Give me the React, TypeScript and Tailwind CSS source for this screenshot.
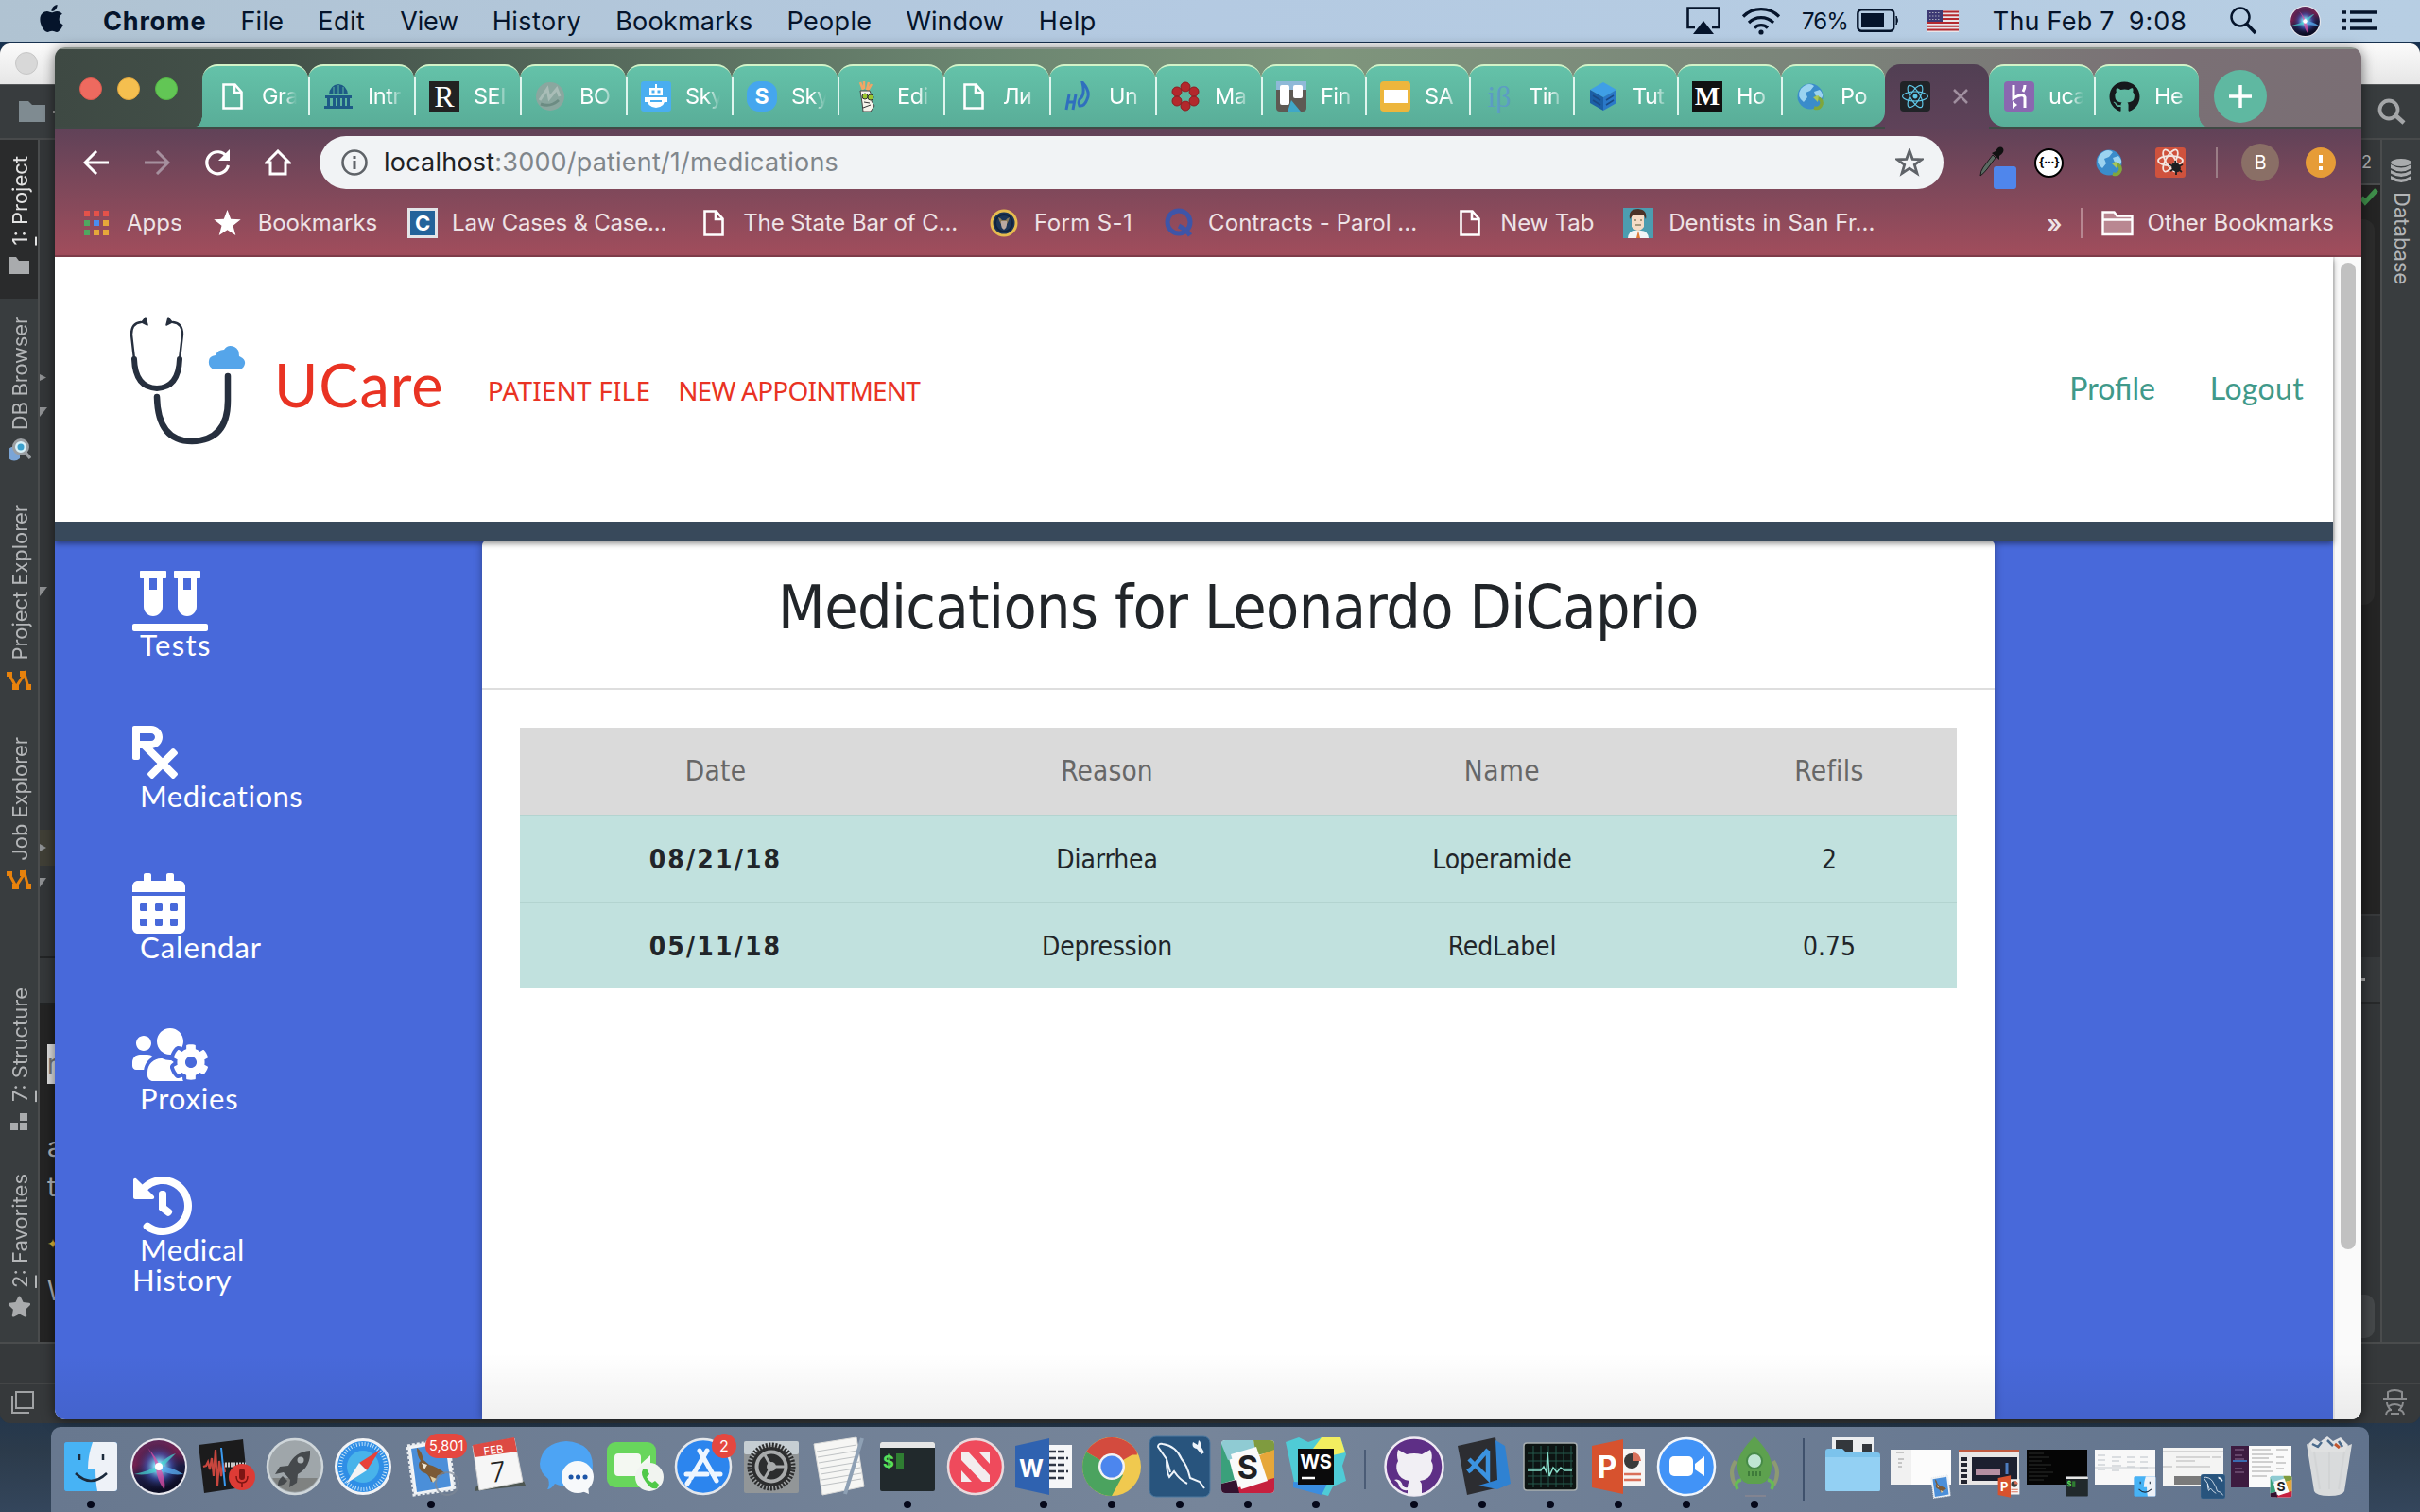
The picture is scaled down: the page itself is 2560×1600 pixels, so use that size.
import React, { useLayoutEffect, useRef, useState } from "react";
import { FaApple, FaCalendarAlt, FaGithub, FaGithubAlt, FaHistory, FaPrescription, FaReact, FaStar, FaUsersCog, FaVials } from "react-icons/fa";

/* Text run whose letter spacing is computed so that it fills exactly `w` pixels. */
function T({ w, className = "", children }: { w: number; className?: string; children: string }) {
  const ref = useRef<HTMLSpanElement>(null);
  const [spacing, setSpacing] = useState(0);
  useLayoutEffect(() => {
    const el = ref.current;
    if (el) setSpacing((w - el.offsetWidth) / children.length);
  }, [w, children]);
  return (
    <span ref={ref} className={"inline-block shrink-0 whitespace-pre " + className} style={{ letterSpacing: spacing }}>
      {children}
    </span>
  );
}

/* ---------- menu bar ---------- */

function MenuBar() {
  return (
    <header className="relative flex h-[44px] items-center bg-linear-to-r from-[#b0c3d2] via-[#b4cae2] to-[#b7cee3] font-[Inter,sans-serif] text-[27px] leading-[45px] font-normal text-[#05142b]">
      <FaApple className="-mt-[5px] ml-[40px] h-[33px] w-[29px]" />
      <T w={109} className="ml-[40px] font-bold">Chrome</T>
      <T w={46} className="ml-[36px]">File</T>
      <T w={50} className="ml-[36px]">Edit</T>
      <T w={62} className="ml-[37px]">View</T>
      <T w={94} className="ml-[36px]">History</T>
      <T w={145} className="ml-[36px]">Bookmarks</T>
      <T w={90} className="ml-[36px]">People</T>
      <T w={103} className="ml-[36px]">Window</T>
      <T w={61} className="ml-[37px]">Help</T>
      <div className="ml-auto flex items-center">
        <svg className="h-[30px] w-[36px]" viewBox="0 0 36 30">
          <path d="M9 22H1.5V1.5h33V22H27" fill="none" stroke="currentColor" strokeWidth="2.6" />
          <path d="M18 15l11 14H7z" fill="currentColor" />
        </svg>
        <svg className="ml-[22px] h-[30px] w-[42px]" viewBox="0 0 42 30" fill="none" stroke="currentColor" strokeWidth="3.2">
          <path d="M2 10.500a27 27 0 0 1 38 0M8 17a18.500 18.500 0 0 1 26 0M14 22.500a10 10 0 0 1 14 0" />
          <circle cx="21" cy="27" r="2.600" fill="currentColor" stroke="none" />
        </svg>
        <T w={49} className="ml-[22px] text-[24px]">76%</T>
        <svg className="ml-[9px] h-[26px] w-[46px]" viewBox="0 0 46 26">
          <rect x="1.300" y="1.300" width="38" height="22.400" rx="4" fill="none" stroke="currentColor" strokeWidth="2.400" />
          <rect x="5" y="5" width="24" height="15" fill="currentColor" />
          <path d="M42 8q3 4.500 0 9z" fill="currentColor" stroke="currentColor" />
        </svg>
        <svg className="ml-[29px] h-[23px] w-[33px]" viewBox="0 0 33 23">
          <rect width="33" height="23" fill="#e9e6ea" />
          <path d="M0 1.500h33M0 5.300h33M0 9.100h33M0 12.900h33M0 16.700h33M0 20.500h33" stroke="#b5292f" strokeWidth="2" />
          <rect width="16" height="12" fill="#3d3a74" />
          <path d="M2 2.500h12M2 6h12M2 9.500h12" stroke="#aab" strokeWidth="1" strokeDasharray="1.500 1.500" />
        </svg>
        <T w={129} className="ml-[36px]">Thu Feb 7</T>
        <T w={62} className="ml-[15px]">9:08</T>
        <svg className="ml-[44px] h-[30px] w-[30px]" viewBox="0 0 30 30" fill="none" stroke="currentColor" strokeWidth="2.500">
          <circle cx="12" cy="11" r="9.500" />
          <path d="M18.500 18L28 28" strokeWidth="3.500" />
        </svg>
        <SiriIcon className="ml-[34px] h-[33px] w-[33px]" />
        <svg className="mr-[45px] ml-[23px] h-[22px] w-[37px]" viewBox="0 0 37 22" stroke="currentColor" strokeWidth="3.600">
          <path d="M0 2h4M8 2h29M0 10.500h4M8 10.500h23M0 19h4M8 19h29" />
        </svg>
      </div>
    </header>
  );
}

function SiriIcon({ className }: { className?: string }) {
  return (
    <svg className={className} viewBox="0 0 60 60">
      <defs>
        <radialGradient id="siriGlow">
          <stop offset="0" stopColor="#ffffff" />
          <stop offset=".2" stopColor="#7fd6f0" />
          <stop offset=".55" stopColor="#3b4fa8" stopOpacity=".7" />
          <stop offset="1" stopColor="#171233" stopOpacity="0" />
        </radialGradient>
        <linearGradient id="siriBase" x1="0" y1="0" x2=".3" y2="1">
          <stop offset="0" stopColor="#54295a" />
          <stop offset=".45" stopColor="#73204f" />
          <stop offset=".7" stopColor="#1b1c42" />
          <stop offset="1" stopColor="#0c0d24" />
        </linearGradient>
      </defs>
      <circle cx="30" cy="30" r="30" fill="#e8e8ee" />
      <circle cx="30" cy="30" r="28" fill="url(#siriBase)" />
      <circle cx="30" cy="30" r="25" fill="url(#siriGlow)" />
      <path d="M4 38Q22 34 30 28 40 18 48 16 38 26 32 32 24 40 4 38z" fill="#45d6d0" opacity=".7" />
      <path d="M18 10Q28 20 31 30 38 44 36 55 28 44 27 32 26 20 18 10z" fill="#e04ea4" opacity=".75" />
      <path d="M30 29Q44 30 56 38 40 40 30 32z" fill="#56a8ea" opacity=".8" />
      <circle cx="30" cy="30" r="4" fill="#fff" />
    </svg>
  );
}

/* ---------- IDE window in the background ---------- */

function VLabel({ h, top, children }: { h: number; top: string; children: string }) {
  return (
    <div className={"-mr-[2px] rotate-180 text-[22px] leading-[40px] [writing-mode:vertical-rl] " + top}>
      <VFit h={h}>{children}</VFit>
    </div>
  );
}

function VFit({ h, children }: { h: number; children: string }) {
  const ref = useRef<HTMLSpanElement>(null);
  const [spacing, setSpacing] = useState(0);
  useLayoutEffect(() => {
    const el = ref.current;
    if (el) setSpacing((h - el.offsetHeight) / children.length);
  }, [h, children]);
  return (
    <span ref={ref} className="inline-block whitespace-pre" style={{ letterSpacing: spacing }}>
      {/^\d/.test(children) ? (
        <>
          <u className="decoration-2 underline-offset-4">{children[0]}</u>
          {children.slice(1)}
        </>
      ) : (
        children
      )}
    </span>
  );
}

function OrangeNodes({ className }: { className: string }) {
  return (
    <svg className={"h-[23px] w-[26px] shrink-0 " + className} viewBox="0 0 26 23" fill="none" stroke="#e8820c" strokeWidth="3">
      <path d="M3 5l7 13 9-14 4 15" />
      <path d="M0 2h6v5H0zM6 15h7v6H6zM14 1h7v6h-7zM20 15h6v6h-6z" fill="#e8820c" stroke="none" />
    </svg>
  );
}

function IdeWindow() {
  return (
    <section className="absolute inset-x-0 top-[46px] flex h-[1460px] flex-col overflow-hidden rounded-[11px] bg-[#36393b] font-[Inter,sans-serif] text-[#b4b6b8]">
      <div className="flex h-[43px] items-center bg-linear-to-b from-[#fbfbfb] to-[#e6e6e6] pl-[16px]">
        <div className="-mt-[1px] size-[24px] rounded-full border border-[#c6c6c6] bg-[#d8d8d8]" />
      </div>
      <div className="flex h-[59px] items-center border-t border-b-2 border-t-[#55585a] border-b-[#484a4b] bg-[#383c3e] pr-[15px] pl-[20px]">
        <svg className="h-[22px] w-[28px]" viewBox="0 0 28 22">
          <path d="M0 0h10l4 4h14v18H0z" fill="#7f8b91" />
        </svg>
        <div className="ml-[8px] h-[3px] w-[3px] bg-[#999]" />
        <svg className="ml-auto h-[28px] w-[30px]" viewBox="0 0 30 28" fill="none" stroke="#a4a6a8" strokeWidth="3.800">
          <circle cx="12" cy="12" r="9.500" />
          <path d="M19 18l9 8" strokeWidth="4.500" />
        </svg>
      </div>
      <div className="flex h-[1272px] justify-between">
        <div className="flex w-[58px]">
          <div className="flex w-[42px] shrink-0 flex-col items-center border-r-2 border-[#4a4c4d] bg-[#393d3f]">
            <div className="flex h-[168px] w-full flex-col items-center bg-[#2a2b2c] text-[#e3e3e3]">
              <VLabel h={95} top="mt-[17px]">1: Project</VLabel>
              <svg className="mt-[12px] h-[18px] w-[22px]" viewBox="0 0 22 18">
                <path d="M0 0h8l3 4h11v14H0z" fill="#a9abad" />
              </svg>
            </div>
            <VLabel h={120} top="mt-[19px]">DB Browser</VLabel>
            <svg className="mt-[8px] h-[25px] w-[25px] shrink-0" viewBox="0 0 25 25">
              <path d="M1 12q5-5 12 0v10q-6 5-12 0z" fill="#7ba5d6" />
              <circle cx="14" cy="10" r="7.500" fill="#d9f1f8" stroke="#9b9fa3" strokeWidth="3" />
              <circle cx="14" cy="10" r="3.500" fill="#3aa0cc" />
              <path d="M19 16l5 6" stroke="#9b9fa3" strokeWidth="3.500" />
            </svg>
            <VLabel h={165} top="mt-[46px]">Project Explorer</VLabel>
            <OrangeNodes className="mt-[10px]" />
            <VLabel h={131} top="mt-[48px]">Job Explorer</VLabel>
            <OrangeNodes className="mt-[10px]" />
            <VLabel h={121} top="mt-[102px]">7: Structure</VLabel>
            <svg className="mt-[11px] h-[18px] w-[18px] shrink-0" viewBox="0 0 18 18" fill="#a9abad">
              <path d="M10 0h8v8h-8zM0 10h8v8H0zM10 10h8v8h-8z" />
            </svg>
            <VLabel h={121} top="mt-[46px]">2: Favorites</VLabel>
            <FaStar className="mt-[7px] size-[25px] shrink-0 text-[#a9abad]" />
          </div>
          <div className="flex flex-1 flex-col bg-[#333638] text-[28px]">
            <div className="mt-[248px] h-[7px] w-[7px] bg-[#8e9092] [clip-path:polygon(0_0,100%_50%,0_100%)]" />
            <div className="mt-[28px] h-[10px] w-[8px] bg-[#8e9092] [clip-path:polygon(0_0,100%_0,0_100%)]" />
            <div className="mt-[180px] h-[10px] w-[8px] bg-[#8e9092] [clip-path:polygon(0_0,100%_0,0_100%)]" />
            <div className="mt-[247px] flex h-[38px] items-center bg-[#403f36]">
              <div className="h-[8px] w-[7px] bg-[#8e9092] [clip-path:polygon(0_0,100%_50%,0_100%)]" />
            </div>
            <div className="mt-[13px] h-[10px] w-[7px] bg-[#8e9092] [clip-path:polygon(0_0,100%_0,0_100%)]" />
            <div className="mt-[73px] h-[51px] border-y-2 border-[#232526] bg-[#35383a]" />
            <div className="flex flex-1 flex-col bg-[#242424] pl-[8px]">
              <div className="mt-[42px] h-[42px] bg-[#e2e2e2] leading-[42px] text-[#777]">r</div>
              <div className="mt-[46px] leading-[42px]">a</div>
              <div className="leading-[42px]">t</div>
              <div className="mt-[30px] h-[38px] text-[14px] leading-[18px] text-[#e0b83a]">✦</div>
              <div className="leading-[42px]">W</div>
            </div>
          </div>
        </div>
        <div className="flex w-[62px]">
          <div className="flex w-[20px] flex-col bg-[#242424]">
            <div className="h-[48px] border-b-2 border-[#4a4c4d] bg-[#35383a] text-[18px] leading-[48px]">2</div>
            <svg className="mt-[3px] h-[19px] w-[18px]" viewBox="0 0 18 19" fill="none" stroke="#3f8f4a" strokeWidth="5">
              <path d="M0 10l4 5L16 2" />
            </svg>
            <div className="mt-[14px] h-[408px] w-[14px] rounded-r-[12px] bg-[#2c2c2c]" />
            <div className="mt-[327px] h-[46px] border-t-2 border-[#37393b] bg-[#2d2f31]" />
            <div className="flex h-[49px] items-center border-b-2 border-[#27292a] bg-[#36393b]">
              <div className="h-[3px] w-[4px] bg-[#aaa]" />
            </div>
            <div className="flex-1 bg-[#333638] pt-[308px]">
              <div className="h-[46px] w-[14px] rounded-r-[10px] bg-[#45484a]" />
            </div>
          </div>
          <div className="flex flex-1 flex-col items-center border-l-2 border-[#4a4c4d] bg-[#393d3f] pt-[20px]">
            <svg className="h-[26px] w-[22px]" viewBox="0 0 22 26" fill="#a9abad">
              <ellipse cx="11" cy="4" rx="11" ry="4" />
              <path d="M0 6q11 7 22 0v4q-11 7-22 0zM0 12q11 7 22 0v3.500q-11 7-22 0zM0 18q11 7 22 0v3.500q-11 7-22 0z" />
            </svg>
            <div className="mt-[9px] -mr-[1px] text-[22px] leading-[36px] [writing-mode:vertical-rl]">
              <VFit h={98}>Database</VFit>
            </div>
          </div>
        </div>
      </div>
      <div className="h-[43px] border-t-2 border-[#4a4c4d] bg-[#36393b]" />
      <div className="flex flex-1 items-center justify-between border-t-2 border-[#444647] bg-[#36393b] pr-[14px] pb-[4px] pl-[12px]">
        <svg className="h-[24px] w-[24px]" viewBox="0 0 24 24" fill="none" stroke="#a0a2a4" strokeWidth="2">
          <path d="M5 1h18v17H5zM1 5v18h18" />
        </svg>
        <svg className="h-[28px] w-[25px]" viewBox="0 0 25 28" fill="none" stroke="#8b8d8f" strokeWidth="2">
          <path d="M5 9V3q7-4 15 0v6M0 10h25M4 14q0 4 4 8M21 14q0 4-4 8M6 18q6-4 13 0M3 27q1-5 6-5M22 27q-1-5-6-5M8 26h9" />
        </svg>
      </div>
    </section>
  );
}

/* ---------- favicons ---------- */

function DocIcon({ className = "h-[28px] w-[22px]" }: { className?: string }) {
  return (
    <svg className={className} viewBox="0 0 22 28" fill="none" stroke="#fff" strokeWidth="2.600">
      <path d="M1.500 1.500h12l7 8v17h-19z" />
      <path d="M13 2v8h7.500" />
    </svg>
  );
}

function Globe() {
  return (
    <svg className="size-[32px]" viewBox="0 0 32 32">
      <circle cx="15" cy="16" r="13.500" fill="#3a8ccb" />
      <path d="M5 8q8-8 14-3l-4 5-5 2 2 5-4 5Q0 16 5 8zM19 11l6-2q5 5 2 9l-6-2z" fill="#9bd3f0" />
      <path d="M20 17q8 1 7 7-2 6-8 4" fill="none" stroke="#7fa63c" strokeWidth="3.500" />
      <path d="M24 15l-6 2 5 5z" fill="#a8c65a" />
    </svg>
  );
}

const box = (cls: string, child: React.ReactNode) => <div className={"flex size-[32px] items-center justify-center " + cls}>{child}</div>;

const FAV: Record<string, React.ReactNode> = {
  doc: box("", <DocIcon />),
  dome: (
    <svg className="size-[32px]" viewBox="0 0 32 32" fill="#1d5a86">
      <path d="M6 14q1-10 10-11 9 1 10 11zM2 15h28v3H2zM4 18h3v8H4zM10 18h3v8h-3zM15 18h3v8h-3zM20 18h3v8h-3zM25 18h3v8h-3zM1 26h30v3H1z" />
      <path d="M16 4v10M11 6v8M21 6v8" stroke="#5cb59e" />
    </svg>
  ),
  r: box("bg-[#222] font-['Liberation_Serif',serif] text-[32px] text-white", "R"),
  grey: (
    <svg className="size-[32px]" viewBox="0 0 32 32">
      <circle cx="16" cy="16" r="15" fill="#8aa79f" />
      <path d="M5 20l8-12 2 10 8-10 3 8" fill="none" stroke="#a9bdb7" strokeWidth="3" />
      <path d="M6 24q10 4 19-4" fill="none" stroke="#6c8c83" strokeWidth="3" />
    </svg>
  ),
  robot: (
    <svg className="size-[32px]" viewBox="0 0 32 32">
      <rect width="32" height="32" rx="3" fill="#4aaef0" />
      <path d="M15 3h2v4h-2zM9 7h14v8H9zM6 17h20q0 10-10 11Q6 27 6 17zM4 17h3v5H4zM25 17h3v5h-3z" fill="#fff" />
      <path d="M11.500 9.500h3v3h-3zM17.500 9.500h3v3h-3zM10 20h12v2H10z" fill="#4aaef0" />
    </svg>
  ),
  skype: box("rounded-[13px] bg-[#45a6ee] font-[Inter,sans-serif] text-[23px] font-bold text-white", "S"),
  daddy: (
    <svg className="size-[32px]" viewBox="0 0 32 32">
      <path d="M8 1l3 8M12 0v8M17 1l-2 8M20 3l-4 7" stroke="#f0a565" strokeWidth="2.500" />
      <path d="M8 10h10l2 5v6l3 5-4 6h-8l-1-9z" fill="#f6f3ea" stroke="#444" />
      <circle cx="13" cy="16" r="3" fill="#9ac531" stroke="#333" />
      <circle cx="19" cy="17" r="3" fill="#9ac531" stroke="#333" />
      <path d="M12 22l6 1M11 28l8-3" stroke="#333" />
    </svg>
  ),
  hd: (
    <svg className="size-[32px]" viewBox="0 0 32 32" fill="none" stroke="#2f6fbe" strokeWidth="3">
      <path d="M5 14L2 30M12 14L9 30M4 22h7M19 1q9 10 5 18-3 8-8 7-2-5 1-8 5-4 2-17z" />
    </svg>
  ),
  flower: (
    <svg className="size-[32px]" viewBox="0 0 32 32">
      <g fill="#b3282c" stroke="#8d1c20">
        <circle cx="16" cy="6" r="5" />
        <circle cx="7" cy="11" r="5" />
        <circle cx="25" cy="11" r="5" />
        <circle cx="7" cy="21" r="5" />
        <circle cx="25" cy="21" r="5" />
        <circle cx="16" cy="26" r="5" />
      </g>
      <circle cx="16" cy="16" r="4.500" fill="#5cb59e" />
    </svg>
  ),
  trello: (
    <svg className="size-[32px]" viewBox="0 0 32 32">
      <rect width="32" height="32" rx="4" fill="#5e5953" />
      <path d="M0 0h32v9H0z" fill="#8fb9d8" />
      <path d="M12 32l4-12 10 12z" fill="#3fa7c8" />
      <rect x="4" y="4" width="10" height="21" rx="2" fill="#fff" />
      <rect x="18" y="4" width="10" height="14" rx="2" fill="#fff" />
    </svg>
  ),
  slides: box("rounded-[4px] bg-[#edb63c]", <div className="h-[14px] w-[25px] bg-white" />),
  ib: box("font-['Liberation_Serif',serif] text-[32px] text-[#5c9cc4]", "iβ"),
  cube: (
    <svg className="size-[32px]" viewBox="0 0 32 32">
      <path d="M16 1l14 8-14 8L2 9z" fill="#3f9fe6" />
      <path d="M2 9l14 8v14L2 23z" fill="#1c5fa6" />
      <path d="M30 9l-14 8v14l14-8z" fill="#2a78c8" />
      <path d="M5 15l8 5M5 20l8 5M19 20l8-5M19 25l8-5" stroke="#1a4a86" strokeWidth="1.500" />
    </svg>
  ),
  medium: box("bg-[#111] font-['Liberation_Serif',serif] text-[28px] font-bold text-white", "M"),
  globe: <Globe />,
  react: box("rounded-[4px] bg-[#202327]", <FaReact className="size-[28px] text-[#5fc6e6]" />),
  heroku: (
    <svg className="size-[32px]" viewBox="0 0 32 32">
      <rect width="32" height="32" rx="4" fill="#8a67b0" />
      <path d="M10 4v14q10-6 12-1v11M20 11q2-3 2-7" fill="none" stroke="#fff" strokeWidth="3" />
      <path d="M9 21l5 4-5 4z" fill="#fff" />
    </svg>
  ),
  github: <FaGithub className="size-[33px] text-[#16191c]" />,
};

const TABS: { icon: string; text: string; w: string }[] = [
  { icon: "doc", text: "Gra", w: "w-[112px]" },
  { icon: "dome", text: "Intr", w: "w-[112px]" },
  { icon: "r", text: "SEI", w: "w-[112px]" },
  { icon: "grey", text: "BO", w: "w-[112px]" },
  { icon: "robot", text: "Sky", w: "w-[112px]" },
  { icon: "skype", text: "Sky", w: "w-[112px]" },
  { icon: "daddy", text: "Edi", w: "w-[112px]" },
  { icon: "doc", text: "Ли", w: "w-[112px]" },
  { icon: "hd", text: "Un", w: "w-[112px]" },
  { icon: "flower", text: "Ma", w: "w-[112px]" },
  { icon: "trello", text: "Fin", w: "w-[110px]" },
  { icon: "slides", text: "SA", w: "w-[110px]" },
  { icon: "ib", text: "Tin", w: "w-[110px]" },
  { icon: "cube", text: "Tut", w: "w-[110px]" },
  { icon: "medium", text: "Ho", w: "w-[110px]" },
  { icon: "globe", text: "Po", w: "w-[110px]" },
];

function Tab({ icon, text, w, first, edge = "" }: { icon: string; text: string; w: string; first?: boolean; edge?: string }) {
  const wrap = edge ? "bg-[linear-gradient(to_top,#5d4159_16px,transparent_16px)]" : "";
  return (
    <div className={w + " shrink-0 " + wrap}>
      <div className={"flex h-full items-center rounded-t-[16px] border-t-2 border-[#d3f3c8] bg-linear-to-b from-[#64c2a9] to-[#59ad98] " + edge}>
        <div className={"h-[40px] w-[2px] " + (first ? "" : "bg-[#dff5ee]")} />
        <div className="ml-[14px] shrink-0">{FAV[icon]}</div>
        <div className="ml-[15px] w-[37px] overflow-hidden text-[23.5px] leading-[32px] tracking-[-0.5px] whitespace-nowrap text-white [mask-image:linear-gradient(to_right,black_60%,transparent)]">{text}</div>
      </div>
    </div>
  );
}

function TabStrip() {
  return (
    <div className="flex h-[86px] items-end border-t-2 border-b-2 border-t-[#8b938c] border-b-[#3f4a45] bg-[linear-gradient(90deg,#3e4943_0%,#44524a_10%,#6b8570_40%,#7e957c_55%,#7b857a_75%,#7a7075_92%,#7a6e74_100%)]">
      <div className="flex h-[80px] w-[149px] items-center gap-[16px] pl-[26px]">
        <div className="size-[24px] rounded-full border border-[#dc5a4f] bg-[#ee6a5f]" />
        <div className="size-[24px] rounded-full border border-[#dfa63f] bg-[#f5bf4f]" />
        <div className="size-[24px] rounded-full border border-[#55b646] bg-[#62c655]" />
      </div>
      <div className="h-[14px] w-[7px] bg-[radial-gradient(ellipse_at_top_left,transparent_0_68%,#59ad98_72%)]" />
      <div className="flex h-[66px]">
        {TABS.map((t, i) => (
          <Tab key={i} {...t} first={i === 0} edge={i === 15 ? "rounded-br-[16px]" : ""} />
        ))}
        <div className="flex h-[68px] w-[110px] items-center rounded-t-[16px] bg-linear-to-b from-[#513f53] to-[#5f4259] pl-[16px]">
          {FAV.react}
          <svg className="ml-[24px] size-[16px]" viewBox="0 0 16 16" stroke="#a08f9f" strokeWidth="2.500">
            <path d="M1 1l14 14M15 1L1 15" />
          </svg>
        </div>
        <Tab icon="heroku" text="uca" w="w-[111px]" first edge="rounded-bl-[16px]" />
        <Tab icon="github" text="He" w="w-[111px]" />
      </div>
      <div className="h-[14px] w-[8px] bg-[radial-gradient(ellipse_at_top_right,transparent_0_68%,#59ad98_72%)]" />
      <div className="mb-[4px] ml-[8px] flex size-[56px] items-center justify-center rounded-full bg-[#5fb8a1]">
        <svg className="size-[24px]" viewBox="0 0 24 24" stroke="#fff" strokeWidth="3.500">
          <path d="M12 0v24M0 12h24" />
        </svg>
      </div>
    </div>
  );
}

function Toolbar() {
  return (
    <div className="flex h-[72px] items-center text-[27px]">
      <svg className="ml-[30px] h-[26px] w-[28px]" viewBox="0 0 28 26" fill="none" stroke="#fff" strokeWidth="3">
        <path d="M14 1L2 13l12 12M2 13h25" />
      </svg>
      <svg className="ml-[36px] h-[26px] w-[28px]" viewBox="0 0 28 26" fill="none" stroke="#a6909e" strokeWidth="3">
        <path d="M14 1l12 12-12 12M26 13H1" />
      </svg>
      <svg className="ml-[36px] size-[28px]" viewBox="0 0 28 28" fill="none" stroke="#fff" strokeWidth="3.200">
        <path d="M24 8a11.500 11.500 0 1 0 1.500 9" />
        <path d="M27 0v12H15z" fill="#fff" stroke="none" />
      </svg>
      <svg className="ml-[36px] size-[28px]" viewBox="0 0 28 28" fill="none" stroke="#fff" strokeWidth="3">
        <path d="M2 14L14 2l12 12h-4v12H6V14z" />
      </svg>
      <div className="ml-[30px] flex h-[56px] w-[1718px] items-center rounded-full bg-[#f1f3f5] text-[#80868b]">
        <svg className="ml-[23px] size-[28px]" viewBox="0 0 28 28" fill="none" stroke="#5f6368" strokeWidth="2.600">
          <circle cx="14" cy="14" r="12.500" />
          <path d="M14 12v9M14 7v3" strokeWidth="3" />
        </svg>
        <T w={117} className="mt-[1px] ml-[17px] text-[#202124]">localhost</T>
        <T w={364} className="mt-[1px]">:3000/patient/1/medications</T>
        <svg className="mr-[21px] ml-auto size-[30px]" viewBox="0 0 30 30" fill="none" stroke="#5f6368" strokeWidth="2.800">
          <path d="M15 2.500l3.200 8.800 9.600.5-7.500 5.600 2.700 9-8-5.200-8 5.200 2.700-9-7.500-5.600 9.600-.5z" />
        </svg>
      </div>
      <svg className="ml-[37px] h-[56px] w-[42px] self-center" viewBox="0 0 42 56">
        <rect x="16" y="32" width="24" height="24" rx="3" fill="#4f86ec" />
        <path d="M2 42q0-5 3-9l10-13 3 3-9 12q-3 4-7 7z" fill="#5a6a62" stroke="#1a1a1a" />
        <path d="M14 18l4-2q4-7 8-3 2 4-4 8v4z" fill="#111" />
      </svg>
      <div className="ml-[17px] flex size-[31px] items-center justify-center rounded-full border-2 border-black bg-white text-[13px] font-bold tracking-tighter text-black">{"{···}"}</div>
      <div className="ml-[33px]">
        <Globe />
      </div>
      <div className="ml-[32px] flex size-[32px] items-center justify-center rounded-[3px] bg-[#cf523d]">
        <svg className="size-[30px]" viewBox="0 0 30 30" fill="none" stroke="#f3e5e0" strokeWidth="1.800">
          <ellipse cx="15" cy="13" rx="13" ry="5" />
          <ellipse cx="15" cy="13" rx="13" ry="5" transform="rotate(60 15 13)" />
          <ellipse cx="15" cy="13" rx="13" ry="5" transform="rotate(120 15 13)" />
          <ellipse cx="21" cy="20" rx="4.500" ry="5.500" fill="#1d1f22" stroke="none" transform="rotate(-35 21 20)" />
          <path d="M14 17l6 3M15 24l5-3M20 13l1 6M28 17l-6 3M27 25l-5-4M21 28v-6" stroke="#1d1f22" />
        </svg>
      </div>
      <div className="ml-[32px] h-[32px] w-[2px] bg-[#9b7d86]" />
      <div className="ml-[25px] flex size-[40px] items-center justify-center rounded-full bg-[#8a6f66] text-[20px] text-white">B</div>
      <div className="ml-[28px] flex size-[32px] flex-col items-center justify-center gap-[4px] rounded-full bg-[#e69c37]">
        <div className="h-[8px] w-[4px] bg-white" />
        <div className="size-[4px] bg-white" />
      </div>
    </div>
  );
}

const DOTS = ["bg-[#e4524a]", "bg-[#e4524a]", "bg-[#e4524a]", "bg-[#4fa860]", "bg-[#4b8df0]", "bg-[#e6a83a]", "bg-[#4fa860]", "bg-[#e6a83a]", "bg-[#e6a83a]"];

function Bookmarks() {
  return (
    <div className="flex h-[62px] items-center pb-[6px] text-[24px] text-[#eee3e6]">
      <div className="ml-[31px] grid grid-cols-3 gap-[4px]">
        {DOTS.map((c, i) => (
          <div key={i} className={"size-[6px] " + c} />
        ))}
      </div>
      <T w={59} className="ml-[19px]">Apps</T>
      <svg className="ml-[33px] h-[28px] w-[29px]" viewBox="0 0 29 28" fill="#fff">
        <path d="M14.500 0l3.700 9.800 10.500.5-8.200 6.500 2.800 10.200-8.800-5.800L5.700 27l2.800-10.200L.3 10.300l10.500-.5z" />
      </svg>
      <T w={126} className="ml-[18px]">Bookmarks</T>
      <div className="ml-[32px] flex size-[32px] items-center justify-center border-[3px] border-[#e3e5e8] bg-[#23639a] text-[22px] font-bold text-white">C</div>
      <T w={227} className="ml-[15px]">Law Cases &amp; Case...</T>
      <div className="ml-[39px]">
        <DocIcon />
      </div>
      <T w={227} className="ml-[20px]">The State Bar of C...</T>
      <svg className="ml-[34px] size-[30px]" viewBox="0 0 30 30">
        <circle cx="15" cy="15" r="13" fill="#1c3556" stroke="#e6bb4f" strokeWidth="3" />
        <circle cx="15" cy="15" r="9" fill="none" stroke="#11233c" strokeWidth="2" />
        <path d="M9 9q2 7 4 8h4q2-1 4-8-3 1-4 3h-4q-1-2-4-3z" fill="#8a7a5a" />
        <path d="M12 13h6v4q0 3-3 5-3-2-3-5z" fill="#b9a9a0" />
      </svg>
      <T w={104} className="ml-[17px]">Form S-1</T>
      <svg className="ml-[33px] size-[32px]" viewBox="0 0 32 32" fill="none" stroke="#3e55a8" strokeWidth="5">
        <circle cx="16" cy="15" r="12" />
        <path d="M16 19q8 4 12 10" />
      </svg>
      <T w={221} className="ml-[15px]">Contracts - Parol ...</T>
      <div className="ml-[45px]">
        <DocIcon />
      </div>
      <T w={99} className="ml-[21px]">New Tab</T>
      <svg className="ml-[31px] size-[32px]" viewBox="0 0 32 32">
        <rect width="32" height="32" fill="#4c9db0" />
        <path d="M5 32q1-8 7-8h7q7 0 8 8z" fill="#f2f4f6" />
        <path d="M9 8h13v12q-6 8-13 0z" fill="#f5dcc6" />
        <path d="M7 12Q5 1 16 1q10 1 8 11l-2-4H10z" fill="#4a3328" />
        <path d="M16 24l2 8h-4z" fill="#e07b39" />
        <path d="M12 13h2M18 13h2M13 18h6" stroke="#553" />
      </svg>
      <T w={218} className="ml-[16px]">Dentists in San Fr...</T>
      <div className="ml-auto text-[26px] font-semibold">»</div>
      <div className="ml-[20px] h-[32px] w-[2px] bg-[#b78791]" />
      <svg className="ml-[20px] h-[27px] w-[34px]" viewBox="0 0 34 27" fill="#b98791" stroke="#fff" strokeWidth="2.400">
        <path d="M1.500 1.500h12l3 4h16v19.500h-31z" />
        <path d="M2 9.500h30" />
      </svg>
      <T w={198} className="mr-[29px] ml-[14px]">Other Bookmarks</T>
    </div>
  );
}

/* ---------- the UCare page ---------- */

const NAV = [
  { icon: <FaVials className="h-[64px] w-[80px]" />, text: [["Tests", 76]] },
  { icon: <FaPrescription className="h-[64px] w-[48px]" />, text: [["Medications", 173]] },
  { icon: <FaCalendarAlt className="h-[64px] w-[56px]" />, text: [["Calendar", 129]] },
  { icon: <FaUsersCog className="h-[64px] w-[80px]" />, text: [["Proxies", 105]] },
  { icon: <FaHistory className="h-[64px] w-[64px]" />, text: [["Medical", 111], ["History", 105]] },
] as { icon: React.ReactNode; text: [string, number][] }[];

const HEAD: [string, number][] = [["Date", 64], ["Reason", 98], ["Name", 80], ["Refils", 73]];
const ROWS: [string, number][][] = [
  [["08/21/18", 141], ["Diarrhea", 107], ["Loperamide", 147], ["2", 16]],
  [["05/11/18", 141], ["Depression", 138], ["RedLabel", 115], ["0.75", 56]],
];

function Page() {
  return (
    <div className="flex min-h-0 flex-1 bg-white font-['Noto_Sans',sans-serif]">
      <div className="flex w-[2410px] shrink-0 flex-col">
        <div className="relative z-10 flex h-[300px] shrink-0 border-b-[20px] border-[#38495b] bg-white shadow-[0_3px_6px_rgba(0,0,0,0.45)]">
          <svg className="mt-[62px] ml-[78px] h-[140px] w-[126px] shrink-0" viewBox="0 0 126 140" fill="none" stroke="#262f3e" strokeLinecap="round">
            <path d="M13 7Q3 8 3 20L6 46M47 7Q57 8 57 20L54 46" strokeWidth="2.400" />
            <path d="M18 2l2 8-6-3zM42 2l-2 8 6-3z" strokeWidth="1.500" strokeLinejoin="round" fill="#262f3e" />
            <path d="M6 46Q7 76 30 77 53 76 54 46" strokeWidth="6" />
            <path d="M30 86Q31 133 67 133 105 132 105 90V64" strokeWidth="6.500" />
            <path d="M91 57Q84 55 85 48 85 43 92 42 94 36 101 36 105 30 112 33 117 35 117 43 124 46 123 51 122 56 117 57z" fill="#55a5ea" stroke="none" />
          </svg>
          <T w={180} className="mt-[95px] ml-[28px] font-[Lato,sans-serif] text-[63px] leading-[80px] text-[#e93323]">UCare</T>
          <T w={173} className="mt-[121px] ml-[46px] text-[28px] leading-[40px] text-[#e93323]">PATIENT FILE</T>
          <T w={256} className="mt-[121px] ml-[29px] text-[28px] leading-[40px] text-[#e93323]">NEW APPOINTMENT</T>
          <T w={90} className="mt-[119px] ml-auto font-[Lato,sans-serif] text-[32px] leading-[40px] text-[#40998a]">Profile</T>
          <T w={99} className="mt-[119px] mr-[31px] ml-[58px] font-[Lato,sans-serif] text-[32px] leading-[40px] text-[#40998a]">Logout</T>
        </div>
        <div className="flex flex-1 bg-[#4869da]">
          <nav className="flex w-[452px] shrink-0 flex-col pt-[32px] pl-[82px] font-[Lato,sans-serif] text-[31px] leading-[32px] text-white">
            {NAV.map((n, i) => (
              <div key={i} className="flex h-[160px] flex-col items-start">
                <div className="mb-[-2px]">{n.icon}</div>
                {n.text.map(([t, w], j) => (
                  <T key={t} w={w} className={j === 0 ? "ml-[8px]" : ""}>{t}</T>
                ))}
              </div>
            ))}
          </nav>
          <main className="w-[1600px] rounded-t-[5px] bg-white font-['DejaVu_Sans_Condensed','DejaVu_Sans',sans-serif] shadow-[0_0_8px_rgba(0,0,0,0.35)] [font-stretch:condensed]">
            <h1 className="h-[158px] border-b-2 border-[#dedede] pt-[27px] text-center text-[64px] leading-[88px] text-[#212529]">
              <T w={974}>Medications for Leonardo DiCaprio</T>
            </h1>
            <div className="mx-[40px] mt-[40px] text-[28px] text-[#212529]">
              <div className="grid h-[92px] grid-cols-[414px_414px_422px_270px] justify-items-center bg-[#dadada] text-[29.5px] leading-[93px] text-[#676767]">
                {HEAD.map(([t, w]) => (
                  <T key={t} w={w}>{t}</T>
                ))}
              </div>
              {ROWS.map((r, i) => (
                <div key={i} className="grid h-[92px] grid-cols-[414px_414px_422px_270px] justify-items-center border-t-2 border-[#b3d4d0] bg-[#c1e1de] leading-[92px]">
                  {r.map(([t, w], j) => (
                    <T key={t} w={w} className={j === 0 ? "font-bold" : ""}>{t}</T>
                  ))}
                </div>
              ))}
            </div>
          </main>
        </div>
      </div>
      <div className="flex flex-1 justify-center border-l-2 border-[#e8e8e8] bg-[#fafafa] pt-[6px]">
        <div className="h-[1044px] w-[16px] rounded-full bg-[#c1c1c1]" />
      </div>
    </div>
  );
}

function ChromeWindow() {
  return (
    <section className="absolute top-[50px] left-[58px] flex h-[1452px] w-[2440px] flex-col overflow-hidden rounded-[11px] font-[Inter,sans-serif] shadow-[0_2px_14px_rgba(0,0,0,0.55)]">
      <TabStrip />
      <div className="h-[136px] shrink-0 border-b-2 border-[#843f4d] bg-linear-to-b from-[#604258] to-[#a14d5c]">
        <Toolbar />
        <Bookmarks />
      </div>
      <Page />
      <div className="pointer-events-none absolute inset-x-0 bottom-0 h-[70px] bg-linear-to-b from-transparent to-black/6" />
    </section>
  );
}

/* ---------- dock ---------- */

function Ic({ children }: { children: React.ReactNode }) {
  return (
    <svg className="size-[68px]" viewBox="-2 -2 68 68">
      {children}
    </svg>
  );
}

const label = (x: number, y: number, size: number, fill: string, s: string) => (
  <text x={x} y={y} fontSize={size} fill={fill} textAnchor="middle" fontFamily="Inter, sans-serif" fontWeight="700">
    {s}
  </text>
);

const slack = (
  <>
    <rect x="4" y="4" width="56" height="56" rx="4" fill="#fafafa" />
    <path d="M4 8v42l14-4L8 8z" fill="#3aa07b" />
    <path d="M8 4h30l3 12-30 9L4 8q0-4 4-4z" fill="#8fcbd3" />
    <path d="M38 4h18q4 0 4 4v8l-19 4z" fill="#7f9b3f" />
    <path d="M44 20l16-6v34l-8 2z" fill="#e6a73a" />
    <path d="M22 54l38-10v12q0 4-4 4H20z" fill="#c6203f" />
    <path d="M4 50l16-4 3 14H8q-4 0-4-4z" fill="#34122f" />
    <path d="M14 19l27-8 12 36-28 9z" fill="#fafafa" />
    {label(32, 45, 34, "#1f2024", "S")}
  </>
);

const finder = (
  <>
    <rect x="4" y="6" width="56" height="52" rx="3" fill="#3f9cf2" />
    <path d="M4 9q0-3 3-3h28q-6 14-6 28h8q0 14 2 24H7q-3 0-3-3z" fill="#47b3f5" />
    <path d="M34 6h23q3 0 3 3v46q0 3-3 3H39q-2-10-2-24h-8q0-14 5-28z" fill="#eef2f8" />
    <path d="M20 19v6M45 19v6" stroke="#1b2a3c" strokeWidth="2.500" />
    <path d="M16 39q16 16 33 0" fill="none" stroke="#1b2a3c" strokeWidth="2.500" />
  </>
);

const dolphin = (
  <>
    <rect x="0" y="0" width="64" height="64" rx="7" fill="#28547d" stroke="#4c79a0" />
    <path d="M36 24q5 8 9 20l7 0 6 11q-8-5-16-7-5-10-9-15l-4 15q-5-6-7-16l-4 0" fill="none" stroke="none" />
    <path d="M22 38l-4-14-9-13q0-4 5-3 14 2 20 16 6 7 9 20l10 4 5 7M18 25q0 13 3 18l5-6q6 9 14 13" fill="none" stroke="#eef4fa" strokeWidth="2" />
    <path d="M46 6q-2 6 4 7l5 6 3-2-4-7q1-4-2-6l-1 5z" fill="#eef4fa" />
  </>
);

const ppt = (
  <>
    <path d="M34 13h26v40H34z" fill="#f7f5f4" />
    <circle cx="46" cy="26" r="8" fill="#3a3a3a" />
    <path d="M47 17q8 0 9 9h-9z" fill="#d9705a" />
    <path d="M38 40h18M38 46h18" stroke="#d9705a" strokeWidth="2.500" />
    <path d="M4 10L37 3v58L4 54z" fill="#d7522e" />
    {label(20, 44, 32, "#fff", "P")}
  </>
);

const mail = (
  <>
    <path d="M7 10L50 2l7 54L14 62z" fill="#f3f5f7" stroke="#e9edf0" strokeWidth="3" strokeDasharray="3 2" />
    <path d="M11 13l36-6 6 46-36 6z" fill="#4b8fd9" />
    <path d="M17 12q5 3 7 13l6 5q8 2 17 9-4 2-8 2-2 6-7 7-2-7-6-9-7-2-7-9 0-3 2-4-4-6-4-14z" fill="#7b5a36" />
    <path d="M22 28l6 2-3 5z" fill="#f1ead9" />
    <path d="M31 42l7 3-4 4z" fill="#e3cfa2" />
  </>
);

const term = (
  <>
    <rect x="3" y="6" width="58" height="52" rx="2" fill="#21292c" />
    <path d="M3 12V8q0-2 2-2h54q2 0 2 2v4z" fill="#e6e6e6" />
    {label(12, 33, 18, "#58e05a", "$")}
    <rect x="20" y="18" width="8" height="16" fill="#2f7d32" />
  </>
);

function Mini({ children, badge }: { children: React.ReactNode; badge: React.ReactNode }) {
  return (
    <Ic>
      {children}
      <svg x="40" y="40" width="26" height="26" viewBox="0 0 64 64">
        {badge}
      </svg>
    </Ic>
  );
}

const D1: { n: React.ReactNode; dot?: boolean }[] = [
  { n: <Ic>{finder}</Ic>, dot: true },
  { n: <SiriIcon className="size-[60px]" /> },
  {
    n: (
      <Ic>
        <path d="M2 9L49 3l5 50L8 60z" fill="#1b1b1c" />
        <path d="M7 32l3-1 2-4 2 8 2-12 2 19 2-28 2 38 2-26 2 16 2-14 2 10" fill="none" stroke="#c8463e" strokeWidth="2.200" />
        <path d="M30 30h22" stroke="#c9c9c9" strokeWidth="5" strokeDasharray="2 1" />
        <path d="M26 12l4 40" stroke="#3a9af0" strokeWidth="2" />
        <circle cx="48" cy="43" r="14" fill="#dd3b35" />
        <rect x="45" y="34" width="6" height="12" rx="3" fill="#7c1513" />
        <path d="M42 42q0 7 6 7t6-7M48 49v5" fill="none" stroke="#7c1513" strokeWidth="1.500" />
      </Ic>
    ),
  },
  {
    n: (
      <Ic>
        <circle cx="32" cy="32" r="29" fill="#9fa6aa" stroke="#cfd6da" strokeWidth="2.500" />
        <path d="M8 44a27 27 0 0 0 48 0z" fill="#7f8281" />
        <path d="M48 15q-16 1-23 16l-9 1-5 8 9-2 7 8-1 8 8-5 1-9q14-8 13-25z" fill="#45494c" />
        <circle cx="38" cy="25" r="3.500" fill="#a9afb2" />
        <path d="M19 42q-5 4-5 10 7 0 10-5z" fill="#45494c" />
      </Ic>
    ),
  },
  {
    n: (
      <Ic>
        <circle cx="32" cy="32" r="30" fill="#f2f3f5" />
        <circle cx="32" cy="32" r="27" fill="#2f8ee6" />
        <circle cx="32" cy="32" r="24" fill="none" stroke="#c5e3f9" strokeWidth="4" strokeDasharray="1 2" />
        <circle cx="32" cy="32" r="17" fill="#48b3ea" />
        <path d="M50 14L36 36l-8-8z" fill="#e8413a" />
        <path d="M14 50l14-22 8 8z" fill="#f4f4f4" />
      </Ic>
    ),
  },
  {
    n: (
      <div className="relative">
        <Ic>
          {mail}
          <circle cx="49" cy="50" r="12" fill="none" stroke="#7d8795" strokeWidth="2" opacity=".7" />
        </Ic>
        <div className="absolute -top-[1px] left-[28px] flex h-[26px] items-center rounded-full bg-[#e5473f] px-[4px] text-[14.5px] text-white">5,801</div>
      </div>
    ),
    dot: true,
  },
  {
    n: (
      <Ic>
        <path d="M6 58l54-6-2-5-50 5z" fill="#4d5652" />
        <path d="M4 10L48 2l9 46-46 9z" fill="#f6f6f6" stroke="#d5d5d5" />
        <path d="M4 9L48 1l3 15L6 22z" fill="#dd4a43" />
        <g transform="rotate(-7 30 30)">
          <text x="28" y="18" fontSize="11.500" fill="#fff" textAnchor="middle" fontFamily="Inter, sans-serif">FEB</text>
          <text x="30" y="48" fontSize="29" fill="#222" textAnchor="middle" fontFamily="Inter, sans-serif" fontWeight="300">7</text>
        </g>
      </Ic>
    ),
  },
  {
    n: (
      <Ic>
        <path d="M31 5q28 2 28 26 0 20-26 22-8 0-14-3-4 6-8 6 3-4 1-11Q3 38 3 29 5 7 31 5z" fill="#4da4f4" />
        <circle cx="43" cy="43" r="17" fill="#f7f9fb" />
        <path d="M48 58l7 3-1-9z" fill="#f7f9fb" />
        <path d="M36 43h.1M43.500 43h.1M51 43h.1" stroke="#1e56a8" strokeWidth="5" strokeLinecap="round" />
      </Ic>
    ),
  },
  {
    n: (
      <Ic>
        <rect x="2" y="6" width="52" height="48" rx="9" fill="#68d65c" />
        <path d="M14 18h20q4 0 4 4v16q0 4-4 4H14q-4 0-4-4V22q0-4 4-4z" fill="#f4f8f2" />
        <path d="M38 29l10-9v20l-10-5z" fill="#f4f8f2" />
        <circle cx="47" cy="43" r="15" fill="#f1f4f0" />
        <path d="M40 35l4-1 3 6-3 3q2 4 6 6l3-2 4 4-2 4q-6 2-12-7-6-8-3-13z" fill="#50c948" />
      </Ic>
    ),
  },
  {
    n: (
      <div className="relative">
        <Ic>
          <circle cx="32" cy="32" r="29" fill="#2c85ee" stroke="#e4e7eb" strokeWidth="2.500" />
          <path d="M28 15l18 32M36 15L19 44M14 40h22M42 40h8M17 47l-2 3" stroke="#eef6ff" strokeWidth="5" strokeLinecap="round" />
        </Ic>
        <div className="absolute -top-[1px] left-[43px] flex size-[26px] items-center justify-center rounded-full bg-[#e5473f] text-[16px] text-white">2</div>
      </div>
    ),
  },
  {
    n: (
      <Ic>
        <rect x="3" y="5" width="58" height="55" rx="2" fill="#929698" />
        <rect x="3" y="5" width="58" height="14" rx="2" fill="#c6ced3" />
        <circle cx="32" cy="32" r="23" fill="#a8aaab" stroke="#2c2d2e" strokeWidth="5" strokeDasharray="2 1.500" />
        <circle cx="32" cy="32" r="21" fill="#2c2d2e" />
        <circle cx="32" cy="32" r="15.500" fill="none" stroke="#a8aaab" strokeWidth="4" />
        <path d="M32 32h16M32 32l-8 14M32 32l-8-14" stroke="#a8aaab" strokeWidth="3" />
        <circle cx="32" cy="32" r="5" fill="#a8aaab" />
      </Ic>
    ),
  },
  {
    n: (
      <Ic>
        <path d="M5 8L50 1l8 52-44 9z" fill="#f6f6f4" stroke="#dcdcda" />
        <path d="M8 16l42-7M9 22l42-7M10 28l42-7M11 34l42-7M12 40l42-7M13 46l42-7M13 52l42-7" stroke="#bfc2c4" strokeWidth="1" />
        <path d="M56 2l-18 59" stroke="#8ea0b4" strokeWidth="4" />
      </Ic>
    ),
  },
  { n: <Ic>{term}</Ic>, dot: true },
  {
    n: (
      <Ic>
        <circle cx="32" cy="32" r="29" fill="#ef4a5c" stroke="#e9dadd" strokeWidth="2.500" />
        <path d="M17 17h8l22 24v7h-8L17 25zM36 17h11v12zM17 36l11 12H17z" fill="#f3ecee" />
      </Ic>
    ),
  },
  {
    n: (
      <Ic>
        <path d="M32 9h30v46H32z" fill="#f5f6f8" />
        <path d="M38 16h18M38 23h20M38 30h18M38 37h20M38 44h18" stroke="#303745" strokeWidth="2.500" strokeDasharray="7 2" />
        <path d="M2 10L38 2v60L2 54z" fill="#2f62b0" />
        {label(19, 43, 25, "#fff", "W")}
      </Ic>
    ),
    dot: true,
  },
  {
    n: (
      <Ic>
        <circle cx="32" cy="32" r="31" fill="#f0c94f" />
        <path d="M32 32L5.200 16.500A31 31 0 0 1 58.800 16.500z" fill="#d34b3e" />
        <path d="M32 32L5.200 16.500A31 31 0 0 0 32 63l12-22z" fill="#4ba35f" />
        <path d="M32 18h26.800" stroke="#d34b3e" strokeWidth="3" />
        <circle cx="32" cy="32" r="14" fill="#f3f3f3" />
        <circle cx="32" cy="32" r="11.500" fill="#4c86ee" />
      </Ic>
    ),
    dot: true,
  },
  { n: <Ic>{dolphin}</Ic>, dot: true },
  { n: <Ic>{slack}</Ic>, dot: true },
  {
    n: (
      <Ic>
        <path d="M0 6l14-5 10 5 14-5 20 0 6 18-4 12 4 16-14 6-5 10-35-10z" fill="#4fcbd6" />
        <path d="M38 1h20l5 16-18 4-16-8z" fill="#f2ee60" />
        <path d="M8 48l36 2-6 12-30-8z" fill="#3a8de0" />
        <rect x="13" y="13" width="38" height="38" fill="#0b0b0c" />
        {label(32, 34, 20, "#fff", "WS")}
        <path d="M17 44h14" stroke="#fff" strokeWidth="2.500" />
      </Ic>
    ),
    dot: true,
  },
];

const D2: { n: React.ReactNode; dot?: boolean }[] = [
  {
    n: (
      <Ic>
        <circle cx="32" cy="32" r="30.500" fill="#5e2f86" stroke="#efeaf3" strokeWidth="2.500" />
        <path d="M15 14l9 5q8-2 16 0l9-5q3 6 1 12 3 5 1 11-3 9-13 10 2 2 2 6v9H25v-5q-7 1-9-5-1-4-5-6 6-2 9 6 2 3 5 2 0-4 2-7-10-1-13-10-2-6 1-11-2-6 0-12z" fill="#f1eff4" />
      </Ic>
    ),
    dot: true,
  },
  {
    n: (
      <Ic>
        <path d="M6 10L46 1l8 52-38 9z" fill="#2c2d31" />
        <path d="M46 4l10 6 6 40-14 6-20-4 20-6z" fill="#2f82d2" />
        <path d="M38 14L20 35M18 24l20 20V15M17 34l3 4" fill="none" stroke="#3b93e0" strokeWidth="4.500" />
      </Ic>
    ),
    dot: true,
  },
  {
    n: (
      <Ic>
        <rect x="4" y="7" width="56" height="50" rx="3" fill="#0d1413" stroke="#a7adaf" strokeWidth="1.500" />
        <path d="M8 18h48M8 26h48M8 34h48M8 42h48M8 50h48M14 10v44M22 10v44M30 10v44M38 10v44M46 10v44M54 10v44" stroke="#25584c" />
        <path d="M8 36h14l3-4 3 6 1-22 2 26 4-9 4 5 4-5 4 3h8" fill="none" stroke="#8be0cd" strokeWidth="1.500" />
      </Ic>
    ),
    dot: true,
  },
  { n: <Ic>{ppt}</Ic>, dot: true },
  {
    n: (
      <Ic>
        <circle cx="32" cy="32" r="30" fill="#4193f7" stroke="#f2f6fb" strokeWidth="2.500" />
        <rect x="14" y="21" width="25" height="21" rx="5" fill="#fff" />
        <path d="M41 29l10-8v21l-10-7z" fill="#fff" />
      </Ic>
    ),
    dot: true,
  },
  {
    n: (
      <Ic>
        <path d="M12 26q-8 12 0 26M52 26q8 12 0 26" fill="none" stroke="#8d9a72" strokeWidth="4" />
        <path d="M32 0q20 20 18 34-2 14-11 16H25Q16 48 14 34 12 20 32 0z" fill="#5da14e" />
        <circle cx="32" cy="26" r="8" fill="#bfe6d3" stroke="#468a47" strokeWidth="2" />
        <path d="M26 37v5M30 37v5M34 37v5M38 37v5" stroke="#356f35" strokeWidth="1.500" />
        <path d="M18 46q-8 2-4 10M46 46q8 2 4 10" fill="none" stroke="#66bb55" strokeWidth="3.500" />
        <path d="M22 63h22" stroke="#8a8791" strokeWidth="1.500" />
      </Ic>
    ),
    dot: true,
  },
];

const D3: { n: React.ReactNode; dot?: boolean }[] = [
  {
    n: (
      <Ic>
        <path d="M10 1h44v30H10z" fill="#eceef0" />
        <path d="M14 4h18v14H14zM42 8h10v10H42z" fill="#33373c" />
        <path d="M3 16q0-3 3-3h15l4 4h33q3 0 3 3v36q0 2-2 2H5q-2 0-2-2z" fill="#7cc3ec" />
        <path d="M3 22h58v34q0 2-2 2H5q-2 0-2-2z" fill="#93d0f3" />
      </Ic>
    ),
  },
  {
    n: (
      <Mini badge={mail}>
        <rect x="0" y="14" width="64" height="37" fill="#fcfcfc" />
        <path d="M0 14h22v37H0z" fill="#f1f1f1" />
        <path d="M6 17h8M8 24h6M8 28h4M8 32h4" stroke="#9a9a9a" />
      </Mini>
    ),
  },
  {
    n: (
      <Mini badge={ppt}>
        <rect x="0" y="14" width="64" height="37" fill="#e8e6e6" />
        <rect x="0" y="14" width="64" height="3" fill="#c05a40" />
        <rect x="14" y="22" width="48" height="25" fill="#1d2030" />
        <rect x="18" y="34" width="26" height="7" fill="#b58fa2" />
        <path d="M2 24h7M2 30h7M2 36h7M2 42h7M2 48h7" stroke="#22242f" strokeWidth="4" />
        <path d="M51 28v12" stroke="#4d7cc0" strokeWidth="3" />
      </Mini>
    ),
  },
  {
    n: (
      <Mini badge={term}>
        <rect x="0" y="14" width="64" height="37" fill="#050505" />
        <path d="M2 18h16M2 22h22M2 26h14M2 30h24M2 34h18M2 38h26M2 42h20M2 46h16" stroke="#2c2e2c" />
      </Mini>
    ),
  },
  {
    n: (
      <Mini badge={finder}>
        <rect x="0" y="14" width="64" height="37" fill="#f8f8f8" />
        <path d="M3 20h8M3 25h8M3 30h8M3 35h8M18 22h10M18 26h8M18 31h10M18 36h8M34 22h8M34 27h8M34 32h8M48 22h8M48 27h8M48 33h8" stroke="#bcc2c8" />
        <path d="M0 33h64" stroke="#c7cbd0" />
      </Mini>
    ),
  },
  {
    n: (
      <Mini badge={dolphin}>
        <rect x="0" y="12" width="64" height="41" fill="#f4f4f3" />
        <rect x="12" y="42" width="40" height="9" fill="#7a7a7a" />
        <path d="M0 16h64M14 22h36M14 26h20M14 32h36M0 32h10M52 22h10" stroke="#b5b5b5" />
      </Mini>
    ),
  },
  {
    n: (
      <Mini badge={slack}>
        <rect x="0" y="10" width="64" height="44" fill="#fafafa" />
        <rect x="0" y="10" width="19" height="44" fill="#3d1b40" />
        <path d="M4 14h10M4 20h8M4 24h10M4 34h8M4 38h10" stroke="#8d6f92" />
        <path d="M2 26h15" stroke="#3b6bb0" strokeWidth="2" />
        <path d="M22 14h20M22 19h22M22 23h18M22 27h22M22 32h20M22 37h22M22 42h16M48 14h12M48 22h8M48 28h10M48 34h8" stroke="#a4a4a4" />
      </Mini>
    ),
  },
  {
    n: (
      <Ic>
        <path d="M10 8l6-6 6 4 8-6 6 5 8-4 8 8-4 8H14z" fill="#dfe1e4" />
        <path d="M14 8l6 3 4-5M30 4l6 6M42 5l4 6" stroke="#4a6a8c" strokeWidth="2.500" fill="none" />
        <path d="M38 8l5 4" stroke="#c0562f" strokeWidth="3" />
        <path d="M8 8q24 12 48 0l-8 50q-2 5-16 5t-16-5z" fill="#dfe0e0" opacity=".95" />
        <path d="M16 16l6 40M48 16l-6 40M32 16v40" stroke="#d2d4d5" strokeWidth="2" />
      </Ic>
    ),
  },
];

function Slots({ items }: { items: { n: React.ReactNode; dot?: boolean }[] }) {
  return (
    <>
      {items.map((d, i) => (
        <div key={i} className="flex w-[72px] shrink-0 flex-col items-center pt-[8px]">
          <div className="flex h-[68px] items-center justify-center">{d.n}</div>
          {d.dot && <div className="mt-[2px] size-[8px] rounded-full bg-[#05081a]" />}
        </div>
      ))}
    </>
  );
}

function Dock() {
  return (
    <footer className="absolute bottom-0 left-[54px] flex h-[90px] w-[2452px] rounded-t-[10px] bg-linear-to-r from-[#68788f] via-[#76859a] to-[#61738d] px-[6px] font-[Inter,sans-serif]">
      <Slots items={D1} />
      <div className="mx-[15px] mt-[24px] h-[42px] w-[2px] shrink-0 bg-[#4b5c76]" />
      <Slots items={D2} />
      <div className="mx-[15px] mt-[12px] h-[66px] w-[2px] shrink-0 bg-[#3f516c]" />
      <Slots items={D3} />
    </footer>
  );
}

export default function App() {
  return (
    <div className="relative h-[1600px] w-[2560px] overflow-hidden bg-[#16304e] bg-[linear-gradient(180deg,#16304e_0%,#16304e_90%,#2c3b4b_96%,#34465c_100%)]">
      <MenuBar />
      <IdeWindow />
      <ChromeWindow />
      <Dock />
    </div>
  );
}
